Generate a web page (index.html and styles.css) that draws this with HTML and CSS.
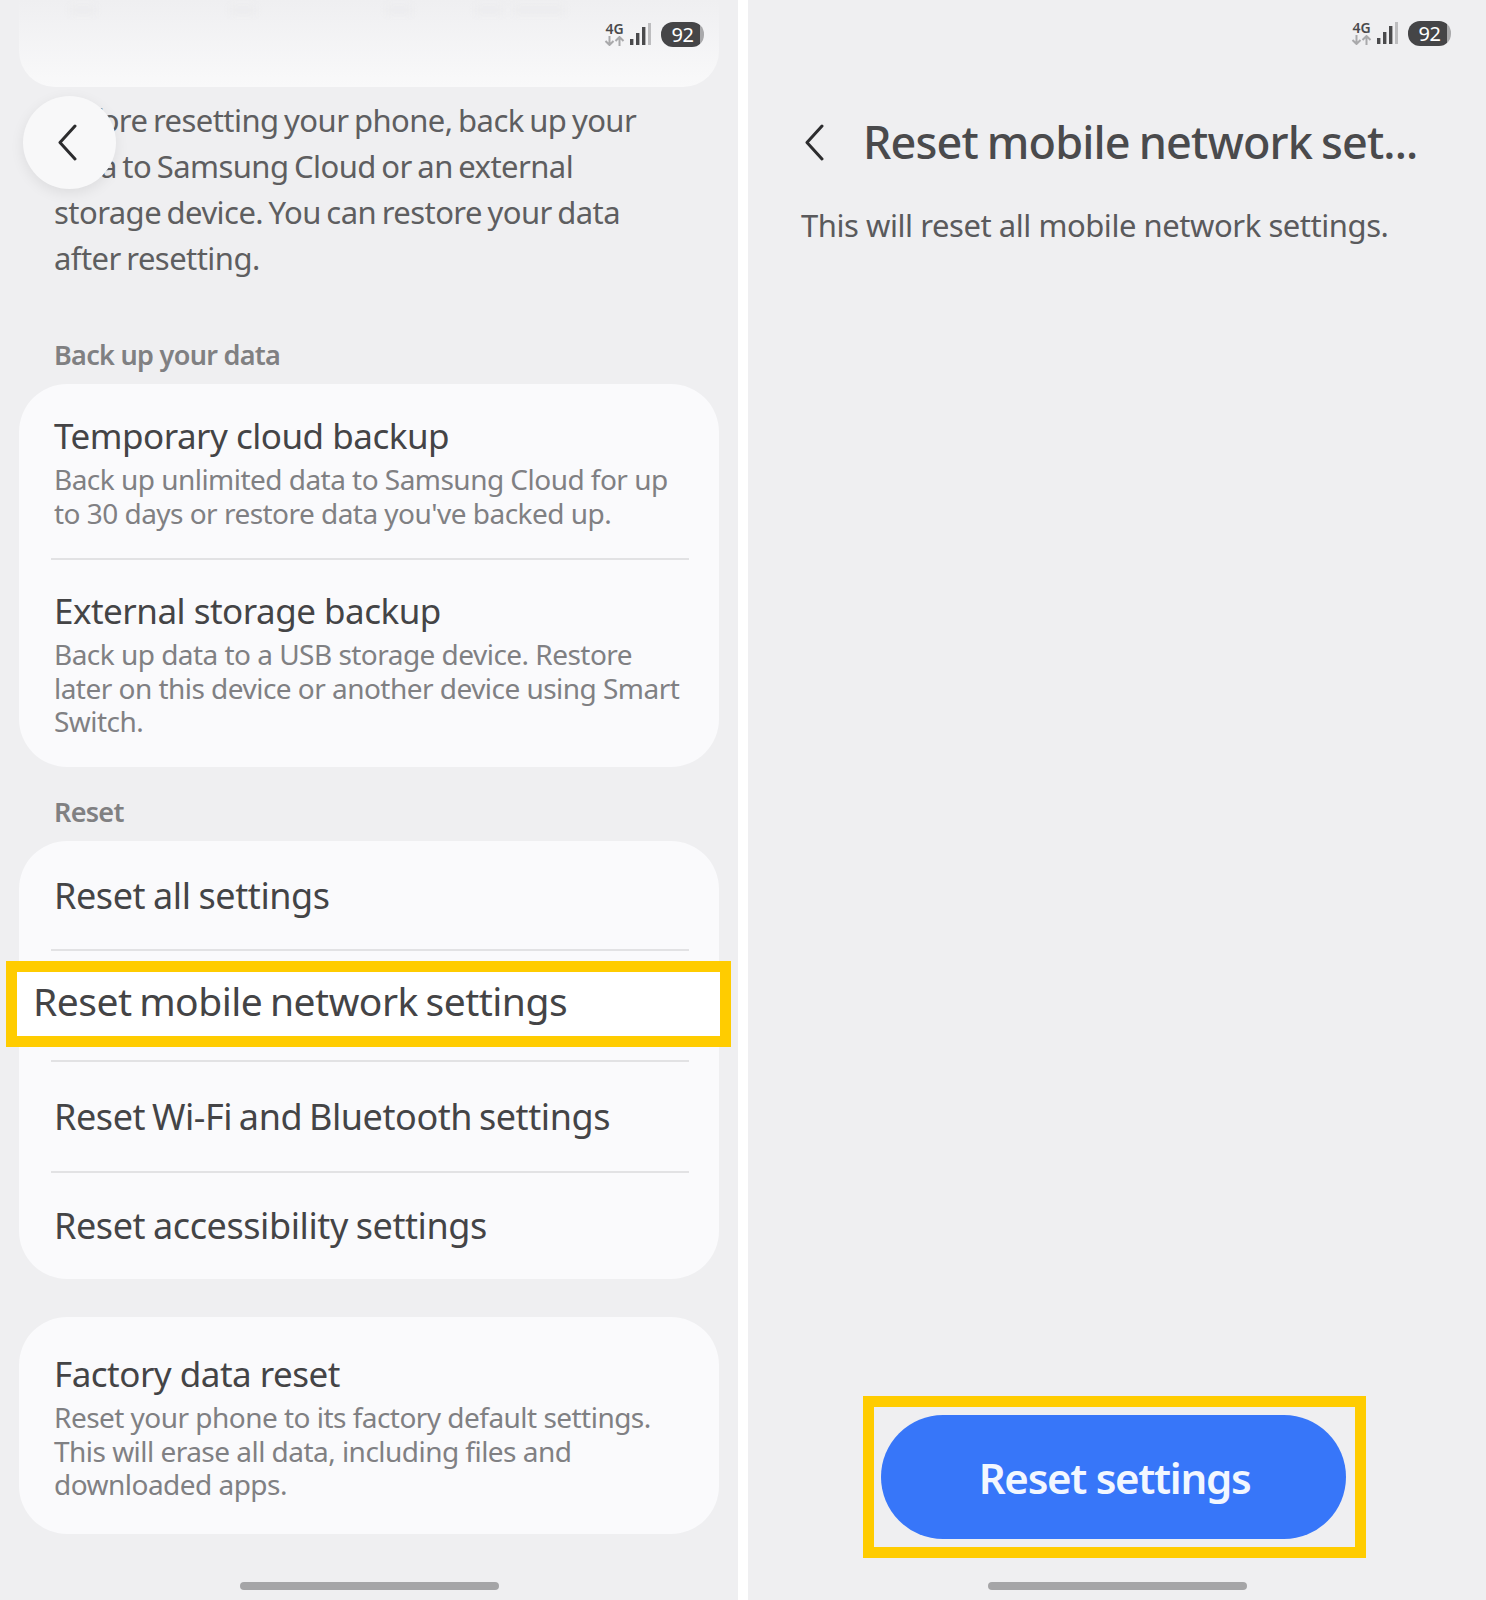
FILE: index.html
```html
<!DOCTYPE html>
<html>
<head>
    <meta charset="UTF-8">
    <meta name="viewport" content="width=device-width, initial-scale=1.0">
    <title>Reset mobile network settings</title>
    <link rel="stylesheet" href="styles.css">
</head>
<body>
    <div class="phones">
        <!-- left screen: backup and reset list -->
        <div class="screen">
            <div class="status">
                <div class="net"><span class="net-label">4G</span>
                    <svg class="net-arrows" width="21" height="10" viewBox="0 0 21 10"><path d="M5.5 0v9M1.5 5l4 4 4-4" fill="none" stroke="#a9a9ab" stroke-width="2"/><path d="M15.5 10V1M11.5 5l4-4 4 4" fill="none" stroke="#a9a9ab" stroke-width="2"/></svg>
                </div>
                <svg class="bars" width="21" height="23" viewBox="0 0 21 23"><rect x="0" y="16" width="3.4" height="6" fill="#4a4a4c"/><rect x="6" y="10" width="3.4" height="12" fill="#4a4a4c"/><rect x="12" y="4" width="3.4" height="18" fill="#4a4a4c"/><rect x="18" y="0" width="3" height="22" fill="#bdbdbf"/></svg>
                <div class="battery">92</div>
            </div>
            <div class="top-card"><div class="top-smudge"></div></div>
            <button class="back-round">
                <svg width="20" height="37" viewBox="0 0 20 37"><path d="M18 2 3 18.5 18 35" fill="none" stroke="#2c2c2e" stroke-width="3" stroke-linecap="round" stroke-linejoin="round"/></svg>
            </button>
            <p class="intro">Before resetting your phone, back up your data to Samsung Cloud or an external storage device. You can restore your data after resetting.</p>

            <h2 class="section-label">Back up your data</h2>
            <div class="card">
                <div class="item first">
                    <div class="item-title">Temporary cloud backup</div>
                    <div class="item-sub">Back up unlimited data to Samsung Cloud for up to 30 days or restore data you've backed up.</div>
                </div>
                <div class="divider"></div>
                <div class="item">
                    <div class="item-title">External storage backup</div>
                    <div class="item-sub">Back up data to a USB storage device. Restore later on this device or another device using Smart Switch.</div>
                </div>
            </div>

            <h2 class="section-label reset-label">Reset</h2>
            <div class="card">
                <div class="row row-all">Reset all settings</div>
                <div class="divider"></div>
                <div class="row-marked">Reset mobile network settings</div>
                <div class="divider"></div>
                <div class="row row-wifi">Reset Wi-Fi and Bluetooth settings</div>
                <div class="divider"></div>
                <div class="row row-access">Reset accessibility settings</div>
            </div>

            <div class="card factory">
                <div class="item">
                    <div class="item-title">Factory data reset</div>
                    <div class="item-sub">Reset your phone to its factory default settings. This will erase all data, including files and downloaded apps.</div>
                </div>
            </div>
            <div class="home-bar"></div>
        </div>

        <!-- right screen: confirm reset -->
        <div class="screen">
            <div class="status status-right">
                <div class="net"><span class="net-label">4G</span>
                    <svg class="net-arrows" width="21" height="10" viewBox="0 0 21 10"><path d="M5.5 0v9M1.5 5l4 4 4-4" fill="none" stroke="#a9a9ab" stroke-width="2"/><path d="M15.5 10V1M11.5 5l4-4 4 4" fill="none" stroke="#a9a9ab" stroke-width="2"/></svg>
                </div>
                <svg class="bars" width="21" height="23" viewBox="0 0 21 23"><rect x="0" y="16" width="3.4" height="6" fill="#4a4a4c"/><rect x="6" y="10" width="3.4" height="12" fill="#4a4a4c"/><rect x="12" y="4" width="3.4" height="18" fill="#4a4a4c"/><rect x="18" y="0" width="3" height="22" fill="#bdbdbf"/></svg>
                <div class="battery">92</div>
            </div>
            <div class="header">
                <svg width="20" height="37" viewBox="0 0 20 37"><path d="M18 2 3 18.5 18 35" fill="none" stroke="#2c2c2e" stroke-width="3" stroke-linecap="round" stroke-linejoin="round"/></svg>
                <h1 class="title">Reset mobile network set...</h1>
            </div>
            <p class="desc">This will reset all mobile network settings.</p>
            <div class="button-frame">
                <button class="reset-button">Reset settings</button>
            </div>
            <div class="home-bar"></div>
        </div>
    </div>
</body>
</html>
```

FILE: styles.css
```css
* {
    box-sizing: border-box;
}

body {
    margin: 0;
    background-color: #FFF;
    font-family: "Noto Sans", "Liberation Sans", sans-serif;
}

.phones {
    display: flex;
    gap: 10px;
    width: 1486px;
    height: 1600px;
    overflow: hidden;
}

.screen {
    position: relative;
    display: flex;
    flex-direction: column;
    width: 738px;
    height: 1600px;
    background-color: #EFEFF1;
}

/* status bar */

.status {
    position: absolute;
    top: 22px;
    right: 34px;
    display: flex;
    align-items: flex-start;
    z-index: 2;
}
.status-right {
    top: 21px;
    right: 35px;
}
.net {
    display: flex;
    flex-direction: column;
    align-items: center;
    width: 21px;
    margin-right: 5px;
}
.net-label {
    height: 14px;
    color: #4a4a4c;
    font-size: 14px;
    font-weight: 600;
    line-height: 14px;
}
.net-arrows {
    display: block;
}
.bars {
    display: block;
    margin: 1px 10px 0 0;
}
.battery {
    width: 43px;
    height: 25px;
    border-radius: 12px;
    background: linear-gradient(90deg, #454547 90%, #a9a9ab 90%);
    color: #FFF;
    font-size: 20px;
    line-height: 25px;
    letter-spacing: -0.5px;
    text-align: center;
}

/* left screen */

.top-card {
    flex: none;
    height: 87px;
    padding-top: 6px;
    margin: 0 19.5px 0 19px;
    border-radius: 0 0 36px 36px;
    background: linear-gradient(#EFEFF1, #F9F9FA);
}
/* leftover of the blurred page header */
.top-smudge {
    height: 8px;
    background: linear-gradient(90deg,
        transparent 51px, #ECECEE 51px, #ECECEE 77px, transparent 77px,
        transparent 211px, #ECECEE 211px, #ECECEE 237px, transparent 237px,
        transparent 367px, #ECECEE 367px, #ECECEE 393px, transparent 393px,
        transparent 456px, #ECECEE 456px, #ECECEE 484px, transparent 484px,
        transparent 494px, #ECECEE 494px, #ECECEE 546px, transparent 546px);
    filter: blur(3px);
}
.back-round {
    position: absolute;
    top: 96px;
    left: 23px;
    display: flex;
    align-items: center;
    justify-content: center;
    width: 93px;
    height: 93px;
    padding: 0 6px 0 0;
    border: 0;
    border-radius: 50%;
    background-color: #F8F8F9;
    box-shadow: 0 4px 14px rgb(0 0 0 / 0.08);
}
.intro {
    margin: 10px 0 0;
    padding: 0 60px 0 54px;
    color: #5E5E60;
    font-size: 31px;
    line-height: 46px;
    letter-spacing: -0.55px;
    word-spacing: -2px;
}
.section-label {
    margin: 57px 0 12px;
    padding-left: 54px;
    color: #808082;
    font-size: 27px;
    font-weight: 600;
    line-height: 34px;
    letter-spacing: -0.7px;
}
.reset-label {
    margin-top: 28.5px;
}

.card {
    flex: none;
    margin: 0 19.5px 0 19px;
    border-radius: 48px;
    background-color: #FAFAFC;
}
.factory {
    margin-top: 38px;
}
.divider {
    height: 2px;
    margin: 0 30px 0 32px;
    background-color: #E2E2E4;
}

.item {
    padding: 29px 32px 28px 35px;
}
.item.first {
    padding-top: 30px;
}
.factory .item {
    padding-top: 35px;
    padding-bottom: 32.5px;
}
.item-title {
    color: #444446;
    font-size: 35px;
    line-height: 44px;
    letter-spacing: -0.5px;
}
.item-sub {
    margin-top: 5px;
    color: #808083;
    font-size: 28px;
    line-height: 33.5px;
    letter-spacing: -0.53px;
}

.row {
    display: flex;
    align-items: center;
    padding-left: 35px;
    color: #444446;
    font-size: 36px;
    letter-spacing: -0.42px;
    word-spacing: -1px;
}
.row-all {
    height: 108px;
}
.row-wifi {
    height: 109px;
    padding-bottom: 1px;
    word-spacing: -2.2px;
}
.row-access {
    height: 106px;
    padding-bottom: 1px;
}
.row-marked {
    display: flex;
    align-items: center;
    height: 86px;
    margin: 10px -12px 13px -13px;
    padding: 0 0 8px 16px;
    border: 11px solid #FFCC00;
    background-color: #FFF;
    color: #444446;
    font-size: 39px;
    letter-spacing: -0.5px;
    word-spacing: -2px;
}

.home-bar {
    flex: none;
    align-self: center;
    width: 259px;
    height: 8px;
    margin: auto 0 10px;
    border-radius: 4px;
    background-color: #A5A5A7;
}

/* right screen */

.header {
    display: flex;
    align-items: center;
    gap: 39px;
    padding: 112px 0 0 56px;
}
.title {
    margin: 0;
    color: #4A4A4C;
    font-size: 45px;
    font-weight: 500;
    line-height: 60px;
    letter-spacing: -0.85px;
    word-spacing: -2px;
    white-space: nowrap;
}
.desc {
    margin: 30px 0 0;
    padding-left: 53px;
    color: #5A5A5C;
    font-size: 31px;
    line-height: 46px;
    letter-spacing: -0.45px;
}
.button-frame {
    width: 503px;
    height: 162px;
    margin: auto 0 24px 115px;
    padding: 8px 9px 0 7px;
    border: 11px solid #FFCC00;
}
.reset-button {
    display: block;
    width: 465px;
    height: 124px;
    padding: 0 0 0 2px;
    border: 0;
    border-radius: 62px;
    background-color: #3776F9;
    color: #F2F7FF;
    font-family: inherit;
    font-size: 42px;
    font-weight: 600;
    letter-spacing: -1.3px;
}
.button-frame + .home-bar {
    margin-top: 0;
}
```
